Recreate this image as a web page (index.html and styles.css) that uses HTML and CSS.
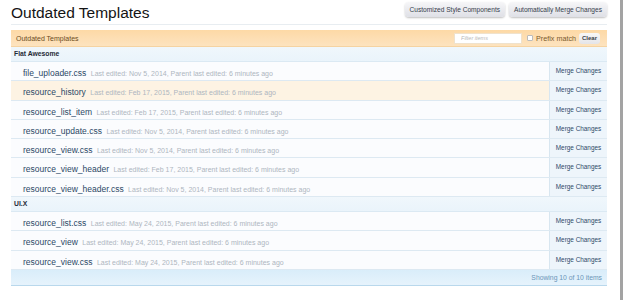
FILE: index.html
```html
<!DOCTYPE html>
<html lang="en">
<head>
    <meta charset="UTF-8">
    <title>Outdated Templates</title>
    <link rel="stylesheet" href="styles.css">
</head>
<body>

<div class="page">
    <div class="title-bar">
        <h1>Outdated Templates</h1>
        <div class="top-buttons">
            <a class="button" href="#">Customized Style Components</a>
            <a class="button" href="#">Automatically Merge Changes</a>
        </div>
    </div>

    <div class="item-list">
        <div class="list-head">
            <span class="list-title">Outdated Templates</span>
            <div class="filter">
                <input type="text" class="filter-input" placeholder="Filter items">
                <span class="checkbox"></span>
                <span class="prefix">Prefix match</span>
                <span class="clear">Clear</span>
            </div>
        </div>

        <div class="group">Flat Awesome</div>
        <div class="row">
            <div class="row-main"><span class="name">file_uploader.css</span> <span class="meta">Last edited: Nov 5, 2014, Parent last edited: 6 minutes ago</span></div>
            <div class="row-action">Merge Changes</div>
        </div>
        <div class="row hover">
            <div class="row-main"><span class="name">resource_history</span> <span class="meta">Last edited: Feb 17, 2015, Parent last edited: 6 minutes ago</span></div>
            <div class="row-action">Merge Changes</div>
        </div>
        <div class="row">
            <div class="row-main"><span class="name">resource_list_item</span> <span class="meta">Last edited: Feb 17, 2015, Parent last edited: 6 minutes ago</span></div>
            <div class="row-action">Merge Changes</div>
        </div>
        <div class="row">
            <div class="row-main"><span class="name">resource_update.css</span> <span class="meta">Last edited: Nov 5, 2014, Parent last edited: 6 minutes ago</span></div>
            <div class="row-action">Merge Changes</div>
        </div>
        <div class="row">
            <div class="row-main"><span class="name">resource_view.css</span> <span class="meta">Last edited: Nov 5, 2014, Parent last edited: 6 minutes ago</span></div>
            <div class="row-action">Merge Changes</div>
        </div>
        <div class="row">
            <div class="row-main"><span class="name">resource_view_header</span> <span class="meta">Last edited: Feb 17, 2015, Parent last edited: 6 minutes ago</span></div>
            <div class="row-action">Merge Changes</div>
        </div>
        <div class="row">
            <div class="row-main"><span class="name">resource_view_header.css</span> <span class="meta">Last edited: Nov 5, 2014, Parent last edited: 6 minutes ago</span></div>
            <div class="row-action">Merge Changes</div>
        </div>

        <div class="group">UI.X</div>
        <div class="row">
            <div class="row-main"><span class="name">resource_list.css</span> <span class="meta">Last edited: May 24, 2015, Parent last edited: 6 minutes ago</span></div>
            <div class="row-action">Merge Changes</div>
        </div>
        <div class="row">
            <div class="row-main"><span class="name">resource_view</span> <span class="meta">Last edited: May 24, 2015, Parent last edited: 6 minutes ago</span></div>
            <div class="row-action">Merge Changes</div>
        </div>
        <div class="row">
            <div class="row-main"><span class="name">resource_view.css</span> <span class="meta">Last edited: May 24, 2015, Parent last edited: 6 minutes ago</span></div>
            <div class="row-action">Merge Changes</div>
        </div>

        <div class="list-foot">Showing 10 of 10 items</div>
    </div>
</div>

</body>
</html>
```

FILE: styles.css
```css
* {
    margin: 0;
    padding: 0;
    box-sizing: border-box;
}

body {
    font-family: "Liberation Sans", Arial, sans-serif;
    background-color: #fff;
    color: #2b4866;
    min-height: 100vh;
    border-right: 3px solid #a3a3a3;
}

.page {
    padding: 0 13px 0 11px;
}

.title-bar {
    display: flex;
    justify-content: space-between;
    align-items: flex-start;
    height: 25px;
    border-bottom: 1px solid #e8edf1;
}

.title-bar h1 {
    font-size: 15.5px;
    font-weight: normal;
    color: #141414;
    line-height: 20px;
    margin-top: 3px;
}

.top-buttons {
    display: flex;
    gap: 4px;
    margin-top: 2px;
}

.button {
    display: block;
    height: 15px;
    line-height: 15px;
    padding: 0 5px;
    font-size: 6.6px;
    color: #36404c;
    text-decoration: none;
    background: linear-gradient(#f6f6f8, #dfe0e6);
    border-radius: 4px;
    box-shadow: 0 1px 2px rgba(0, 0, 0, 0.25);
}

.item-list {
    margin-top: 5px;
}

.list-head {
    display: flex;
    justify-content: space-between;
    align-items: center;
    height: 17px;
    padding: 0 7px 0 5px;
    background: linear-gradient(#fdd9a6, #fde3bf);
    border-bottom: 1px solid #f5d3a2;
}

.list-title {
    font-size: 7px;
    color: #6b4c22;
}

.filter {
    display: flex;
    align-items: center;
}

.filter-input {
    width: 68px;
    height: 11px;
    border: 1px solid #f0e2cc;
    background: #fff;
    font-family: inherit;
    font-size: 5.5px;
    font-style: italic;
    padding: 0 6px;
    outline: none;
}

.filter-input::placeholder {
    color: #b9b9b9;
}

.checkbox {
    width: 6px;
    height: 6px;
    margin-left: 5px;
    border: 1px solid #bbb;
    background: #fff;
    border-radius: 1px;
}

.prefix {
    margin-left: 3px;
    font-size: 7.2px;
    color: #7a5a2c;
}

.clear {
    margin-left: 3px;
    height: 11px;
    line-height: 11px;
    padding: 0 3px;
    font-size: 6px;
    font-weight: bold;
    color: #3a3f47;
    background: linear-gradient(#f8f8f8, #e4e4e8);
    border-radius: 3px;
}

.group {
    height: 15px;
    line-height: 14px;
    padding-left: 3px;
    font-size: 6.8px;
    font-weight: bold;
    color: #1f2b38;
    background: linear-gradient(#f0f7fc, #eaf4fb);
    border-bottom: 1px solid #dbe9f3;
}

.row {
    display: flex;
    height: 19.3px;
    background: #fbfcfe;
    border-bottom: 1px solid #dde9f2;
}

.row.hover {
    background: #fdf3e3;
}

.row-main {
    flex: 1;
    padding-left: 12px;
    line-height: 18px;
    white-space: nowrap;
    overflow: hidden;
}

.name {
    font-size: 8.5px;
    color: #2b4866;
}

.meta {
    font-size: 7px;
    color: #aeb6bf;
}

.row-action {
    width: 58px;
    border-left: 1px solid #d8e6f0;
    background: #eef5fb;
    font-size: 6.4px;
    line-height: 18px;
    text-align: center;
    color: #2e4a68;
}

.list-foot {
    height: 16px;
    line-height: 15px;
    padding-right: 5px;
    text-align: right;
    font-size: 6.8px;
    color: #6b96b9;
    background: linear-gradient(#d9edfa, #e6f3fc);
    border-bottom: 1px solid #b9d8ec;
}
```
